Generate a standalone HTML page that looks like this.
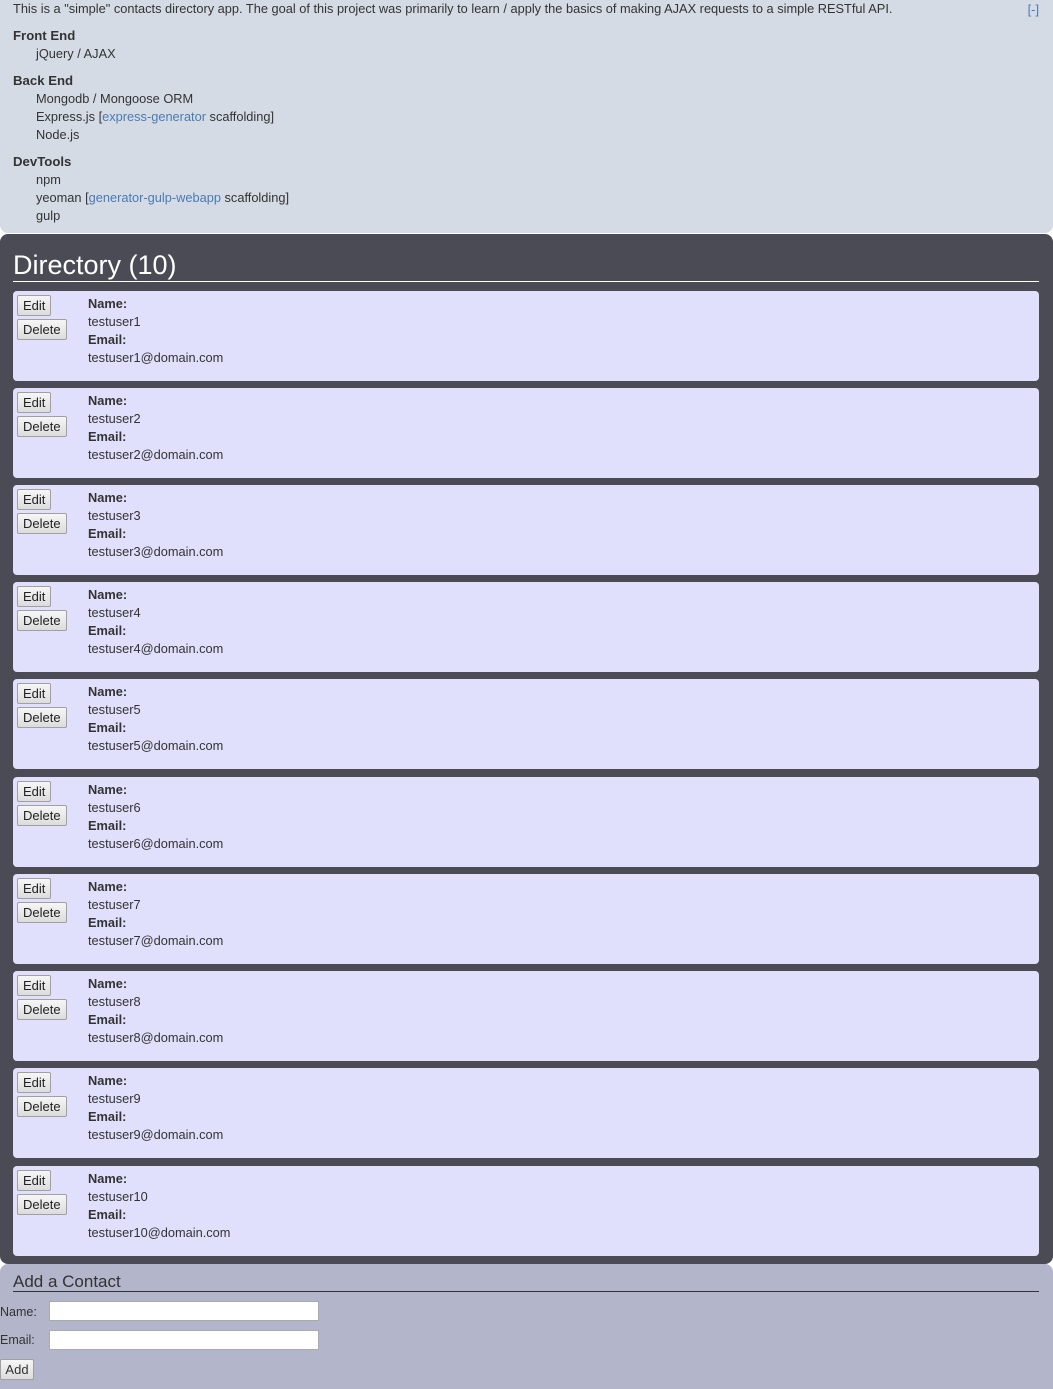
<!DOCTYPE html>
<html><head><meta charset="utf-8"><style>
*{box-sizing:border-box}
body{margin:0;background:#fff;font-family:"Liberation Sans",sans-serif;font-size:12.8px;color:#333;width:1053px;height:1389px;overflow:hidden}
a{color:#4a7ab5;text-decoration:none}
#about{position:absolute;left:0;top:0;width:1053px;height:233px;background:#d5dbe4;border-radius:0 0 8px 8px;padding:0 13px}
#about .intro{position:absolute;top:1px;left:13px;line-height:16px}
#about .toggle{position:absolute;top:2px;right:14px;line-height:16px}
.sec{position:absolute;left:13px;line-height:18px}
.sec b{display:block;font-weight:bold;font-size:13.2px}
.sec div{padding-left:23px}
#dir{position:absolute;left:0;top:234px;width:1053px;height:1030px;background:#4b4b55;border-radius:8px}
#dir h1{position:absolute;left:13px;top:15px;margin:0;width:1026px;font-weight:normal;font-size:27px;color:#fff;line-height:32px;border-bottom:1px solid #fff;height:33px}
.card{position:absolute;left:13px;width:1026px;height:90px;background:#e0e0fc;border-radius:4px}
.btn{position:absolute;left:4px;height:21px;background:linear-gradient(#f6f6f6,#dcdcdc);border:1px solid #a0a0a0;border-radius:2px;font-size:13px;line-height:19px;padding:0 5px;color:#222}
.info{position:absolute;left:75px;top:4px;line-height:18px}
.info b{display:block}
#add{position:absolute;left:0;top:1264px;width:1053px;height:125px;background:#b3b5cb;border-radius:8px 8px 0 0}
#add h2{position:absolute;left:13px;top:8px;margin:0;width:1026px;font-weight:normal;font-size:17px;line-height:20px;color:#333;border-bottom:1px solid #333;height:20px}
.lbl{position:absolute;left:0;font-size:12.5px}
.inp{position:absolute;left:49px;width:270px;height:20px;background:#fff;border:1px solid #aaa}
.add{position:absolute;left:0;top:1359px;height:21px;width:34px;background:linear-gradient(#f6f6f6,#dcdcdc);border:1px solid #a0a0a0;border-radius:2px;line-height:19px;text-align:center;font-size:13px}
</style></head><body>
<div id="about">
<div class="intro">This is a "simple" contacts directory app. The goal of this project was primarily to learn / apply the basics of making AJAX requests to a simple RESTful API.</div>
<a class="toggle">[-]</a>
<div class="sec" style="top:27px"><b>Front End</b><div>jQuery / AJAX</div></div>
<div class="sec" style="top:72px"><b>Back End</b><div>Mongodb / Mongoose ORM</div><div>Express.js [<a>express-generator</a> scaffolding]</div><div>Node.js</div></div>
<div class="sec" style="top:153px"><b>DevTools</b><div>npm</div><div>yeoman [<a>generator-gulp-webapp</a> scaffolding]</div><div>gulp</div></div>
</div>
<div id="dir"><h1>Directory (10)</h1></div>
<div id="add"><h2>Add a Contact</h2></div>
<div class="lbl" style="top:1305px">Name:</div><div class="inp" style="top:1301px"></div>
<div class="lbl" style="top:1333px">Email:</div><div class="inp" style="top:1330px"></div>
<div class="add">Add</div>
<div class="card" style="top:291px"><div class="btn" style="top:4px">Edit</div><div class="btn" style="top:28px">Delete</div><div class="info"><b>Name:</b>testuser1<b>Email:</b>testuser1@domain.com</div></div>
<div class="card" style="top:388px"><div class="btn" style="top:4px">Edit</div><div class="btn" style="top:28px">Delete</div><div class="info"><b>Name:</b>testuser2<b>Email:</b>testuser2@domain.com</div></div>
<div class="card" style="top:485px"><div class="btn" style="top:4px">Edit</div><div class="btn" style="top:28px">Delete</div><div class="info"><b>Name:</b>testuser3<b>Email:</b>testuser3@domain.com</div></div>
<div class="card" style="top:582px"><div class="btn" style="top:4px">Edit</div><div class="btn" style="top:28px">Delete</div><div class="info"><b>Name:</b>testuser4<b>Email:</b>testuser4@domain.com</div></div>
<div class="card" style="top:679px"><div class="btn" style="top:4px">Edit</div><div class="btn" style="top:28px">Delete</div><div class="info"><b>Name:</b>testuser5<b>Email:</b>testuser5@domain.com</div></div>
<div class="card" style="top:777px"><div class="btn" style="top:4px">Edit</div><div class="btn" style="top:28px">Delete</div><div class="info"><b>Name:</b>testuser6<b>Email:</b>testuser6@domain.com</div></div>
<div class="card" style="top:874px"><div class="btn" style="top:4px">Edit</div><div class="btn" style="top:28px">Delete</div><div class="info"><b>Name:</b>testuser7<b>Email:</b>testuser7@domain.com</div></div>
<div class="card" style="top:971px"><div class="btn" style="top:4px">Edit</div><div class="btn" style="top:28px">Delete</div><div class="info"><b>Name:</b>testuser8<b>Email:</b>testuser8@domain.com</div></div>
<div class="card" style="top:1068px"><div class="btn" style="top:4px">Edit</div><div class="btn" style="top:28px">Delete</div><div class="info"><b>Name:</b>testuser9<b>Email:</b>testuser9@domain.com</div></div>
<div class="card" style="top:1166px"><div class="btn" style="top:4px">Edit</div><div class="btn" style="top:28px">Delete</div><div class="info"><b>Name:</b>testuser10<b>Email:</b>testuser10@domain.com</div></div>
</body></html>
